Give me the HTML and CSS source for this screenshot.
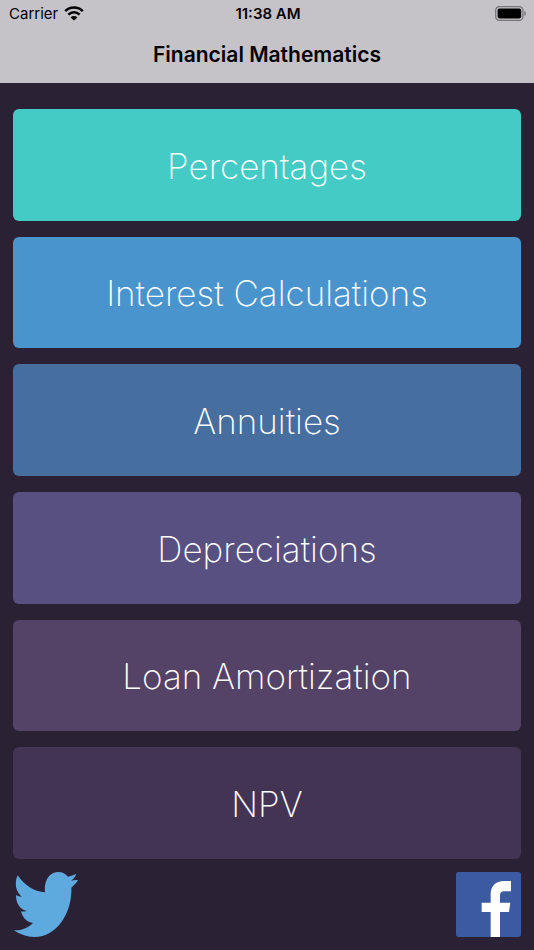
FILE: index.html
```html
<!DOCTYPE html>
<html lang="en">
<head>
  <meta charset="UTF-8">
  <meta name="viewport" content="width=device-width, initial-scale=1.0">
  <title>Financial Mathematics</title>
  <link rel="stylesheet" href="styles.css">
</head>

<body>

<header>
  <div class="status">
    <span class="carrier">
      Carrier
      <svg class="wifi" viewBox="0 0 20 15" aria-hidden="true">
        <path d="M1.2 5.2a12.4 12.4 0 0 1 17.6 0M4.4 8.6a7.9 7.9 0 0 1 11.2 0" fill="none" stroke="#000" stroke-width="2.6"/>
        <path d="M10 14.6L6.6 11.4a4.8 4.8 0 0 1 6.8 0z"/>
      </svg>
    </span>
    <span class="time">11:38 AM</span>
    <svg class="battery" viewBox="0 0 32 15" aria-hidden="true">
      <rect x="0.7" y="0.7" width="27.2" height="13.6" rx="3.6" fill="none" stroke="#77757a" stroke-width="1.3"/>
      <rect x="2.6" y="2.6" width="23.6" height="9.8" rx="1.8"/>
      <path d="M29.4 5v5a2.8 2.8 0 0 0 0-5z" fill="#77757a"/>
    </svg>
  </div>
  <h1>Financial Mathematics</h1>
</header>

<main>
  <button type="button" class="percentages">Percentages</button>
  <button type="button" class="interest">Interest Calculations</button>
  <button type="button" class="annuities">Annuities</button>
  <button type="button" class="depreciations">Depreciations</button>
  <button type="button" class="loan">Loan Amortization</button>
  <button type="button" class="npv">NPV</button>
</main>

<footer>
  <a href="#twitter" aria-label="Twitter">
    <svg viewBox="38 36 195 195" aria-hidden="true">
      <path fill="#5ea9dd" d="M52 46C72 76 101 95 134 97C130 62 147 36 174 36C186 36 196 41 203 50C212 48 220 45 228 41C225 50 219 57 212 62C220 61 227 59 233 61C228 69 221 76 213 83C216 155 172 231 102 231C79 231 58 223 41 211C63 212 82 205 98 189C80 187 67 174 62 154C67 155 73 155 79 153C59 148 47 131 47 105C52 108 59 110 65 110C45 94 42 68 52 46Z"/>
    </svg>
  </a>
  <a href="#facebook" aria-label="Facebook">
    <svg viewBox="37 36 195 195" aria-hidden="true">
      <rect x="37" y="36" width="195" height="195" rx="8" fill="#3b5a9f"/>
      <path fill="#fff" d="M141 231V156H114V128H141V104C141 78 156 63 181 63H202V94H184C173 94 169 98 169 108V128H200L196 156H169V231Z"/>
    </svg>
  </a>
</footer>

</body>
</html>
```

FILE: styles.css
```css
body {
  font-family: Inter, "Liberation Sans", sans-serif;
  background-color: #2b2134;
  margin: 0;
  min-height: 100vh;
  display: flex;
  flex-direction: column;
}
header {
  background-color: #c6c3c8;
  color: black;
  height: 83px;
  box-sizing: border-box;
  text-align: center;
}
.status {
  display: grid;
  grid-template-columns: 1fr auto 1fr;
  align-items: center;
  height: 27px;
  padding: 0 7px 0 9px;
  font-size: 15px;
}
.carrier {
  display: flex;
  align-items: center;
  gap: 6px;
}
.wifi {
  width: 20px;
  height: 15px;
}
.time {
  font-weight: 600;
}
.battery {
  width: 32px;
  height: 15px;
  justify-self: end;
}
h1 {
  margin: 0;
  font-size: 21px;
  font-weight: 600;
  line-height: 56px;
}
main {
  flex: 1;
  display: grid;
  grid-auto-rows: 1fr;
  gap: 16px;
  padding: 26px 13px 13px;
}
button {
  border: none;
  border-radius: 6px;
  padding: 2px 0 0;
  color: white;
  font-family: inherit;
  font-size: 35px;
  font-weight: 200;
  cursor: pointer;
}
.percentages {
  background-color: #44cbc6;
}
.interest {
  background-color: #4a94cd;
}
.annuities {
  background-color: #466e9f;
}
.depreciations {
  background-color: #575081;
}
.loan {
  background-color: #554267;
}
.npv {
  background-color: #443454;
}
footer {
  display: flex;
  justify-content: space-between;
  padding: 0 13px 13px;
}
footer a {
  display: block;
}
footer svg {
  display: block;
  width: 65px;
  height: 65px;
}
```
